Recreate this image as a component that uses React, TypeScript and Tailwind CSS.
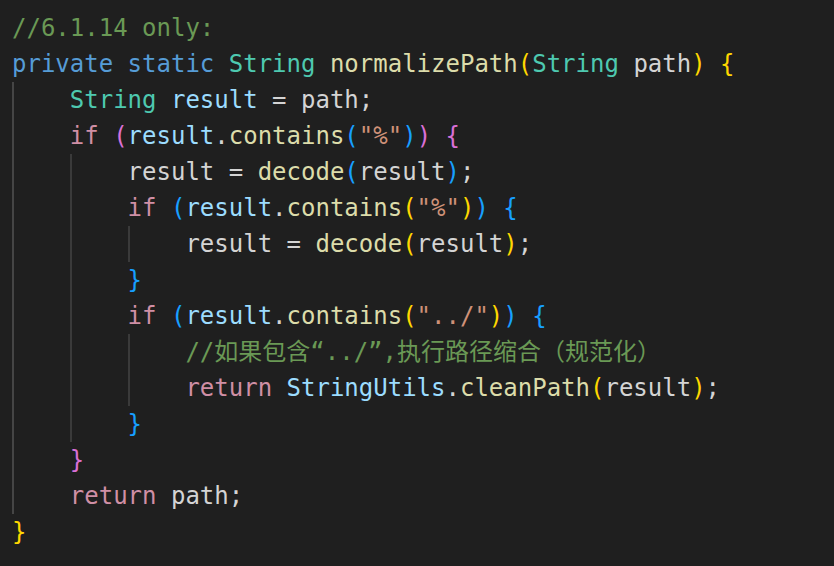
// App.tsx
type Kind = 'cm' | 'kw' | 'ty' | 'fn' | 'vr' | 'tx' | 'ctl' | 'st' | 'b1' | 'b2' | 'b3';

const colors: Record<Kind, string> = {
  cm: 'text-[#6a9955]',
  kw: 'text-[#569cd6]',
  ty: 'text-[#4ec9b0]',
  fn: 'text-[#dcdcaa]',
  vr: 'text-[#9cdcfe]',
  tx: 'text-[#d4d4d4]',
  ctl: 'text-[#d08fa5]',
  st: 'text-[#ce9178]',
  b1: 'text-[#ffd700]',
  b2: 'text-[#da70d6]',
  b3: 'text-[#179fff]',
};

type Token = [string, Kind];
type Line = { indent: number; tokens: Token[] };

const lines: Line[] = [
  { indent: 0, tokens: [['//6.1.14 only:', 'cm']] },
  {
    indent: 0,
    tokens: [
      ['private', 'kw'], [' ', 'tx'], ['static', 'kw'], [' ', 'tx'], ['String', 'ty'], [' ', 'tx'],
      ['normalizePath', 'fn'], ['(', 'b1'], ['String', 'ty'], [' ', 'tx'], ['path', 'tx'], [')', 'b1'],
      [' ', 'tx'], ['{', 'b1'],
    ],
  },
  { indent: 1, tokens: [['String', 'ty'], [' ', 'tx'], ['result', 'vr'], [' = path;', 'tx']] },
  {
    indent: 1,
    tokens: [
      ['if', 'ctl'], [' ', 'tx'], ['(', 'b2'], ['result', 'vr'], ['.', 'tx'], ['contains', 'fn'], ['(', 'b3'],
      ['"%"', 'st'], [')', 'b3'], [')', 'b2'], [' ', 'tx'], ['{', 'b2'],
    ],
  },
  { indent: 2, tokens: [['result = ', 'tx'], ['decode', 'fn'], ['(', 'b3'], ['result', 'tx'], [')', 'b3'], [';', 'tx']] },
  {
    indent: 2,
    tokens: [
      ['if', 'ctl'], [' ', 'tx'], ['(', 'b3'], ['result', 'vr'], ['.', 'tx'], ['contains', 'fn'], ['(', 'b1'],
      ['"%"', 'st'], [')', 'b1'], [')', 'b3'], [' ', 'tx'], ['{', 'b3'],
    ],
  },
  { indent: 3, tokens: [['result = ', 'tx'], ['decode', 'fn'], ['(', 'b1'], ['result', 'tx'], [')', 'b1'], [';', 'tx']] },
  { indent: 2, tokens: [['}', 'b3']] },
  {
    indent: 2,
    tokens: [
      ['if', 'ctl'], [' ', 'tx'], ['(', 'b3'], ['result', 'vr'], ['.', 'tx'], ['contains', 'fn'], ['(', 'b1'],
      ['"../"', 'st'], [')', 'b1'], [')', 'b3'], [' ', 'tx'], ['{', 'b3'],
    ],
  },
  { indent: 3, tokens: [['//如果包含“../”,执行路径缩合（规范化）', 'cm']] },
  {
    indent: 3,
    tokens: [
      ['return', 'ctl'], [' ', 'tx'], ['StringUtils', 'vr'], ['.', 'tx'], ['cleanPath', 'fn'], ['(', 'b1'],
      ['result', 'tx'], [')', 'b1'], [';', 'tx'],
    ],
  },
  { indent: 2, tokens: [['}', 'b3']] },
  { indent: 1, tokens: [['}', 'b2']] },
  { indent: 1, tokens: [['return', 'ctl'], [' ', 'tx'], ['path', 'tx'], [';', 'tx']] },
  { indent: 0, tokens: [['}', 'b1']] },
];

function Guides({ count }: { count: number }) {
  return (
    <>
      {Array.from({ length: count }).map((_, i) => (
        <span
          key={i}
          className={
            i === 0
              ? 'inline-block h-[36px] w-[4ch] shrink-0 border-l-2 border-[#454545]'
              : 'inline-block h-[36px] w-[4ch] shrink-0 border-l-2 border-[#3a3a3a]'
          }
        />
      ))}
    </>
  );
}

export default function App() {
  return (
    <div
      className="h-[566px] w-[834px] overflow-hidden bg-[#1f1f1f] pl-[12px] pt-[10px] text-[24px]"
      style={{ fontFamily: '"DejaVu Sans Mono", "Noto Sans CJK SC", monospace' }}
    >
      {lines.map((line, i) => (
        <div key={i} className="flex h-[36px] items-center whitespace-pre leading-[36px]">
          <Guides count={line.indent} />
          <span>
            {line.tokens.map(([text, kind], j) => (
              <span key={j} className={colors[kind]}>
                {text}
              </span>
            ))}
          </span>
        </div>
      ))}
    </div>
  );
}
